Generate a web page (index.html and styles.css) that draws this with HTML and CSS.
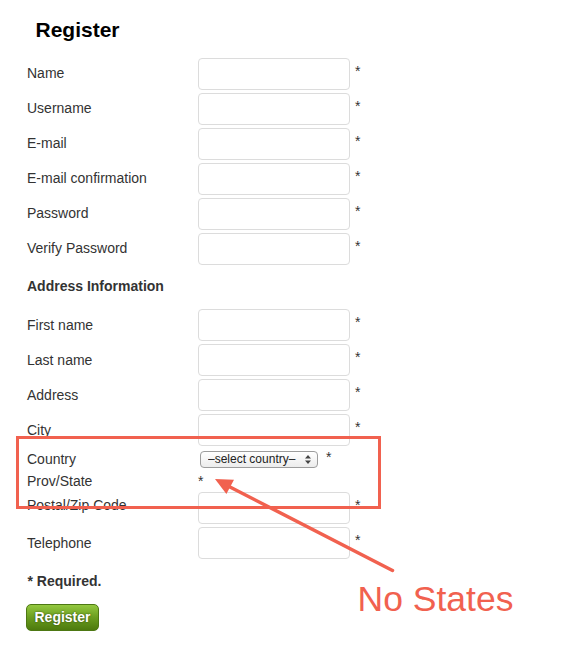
FILE: index.html
```html
<!DOCTYPE html>
<html>

<head>
    <meta name="viewport" content="width=device-width, initial-scale=1">
    <link rel="stylesheet" href="styles.css">
</head>

<body>

    <div class="page">
        <h2 class="title">Register</h2>

        <form class="register-form">
            <div class="row">
                <label class="label">Name</label>
                <input class="field" type="text" name="name">
                <span class="req">*</span>
            </div>
            <div class="row">
                <label class="label">Username</label>
                <input class="field" type="text" name="username">
                <span class="req">*</span>
            </div>
            <div class="row">
                <label class="label">E-mail</label>
                <input class="field" type="text" name="email">
                <span class="req">*</span>
            </div>
            <div class="row">
                <label class="label">E-mail confirmation</label>
                <input class="field" type="text" name="email2">
                <span class="req">*</span>
            </div>
            <div class="row">
                <label class="label">Password</label>
                <input class="field" type="password" name="psw">
                <span class="req">*</span>
            </div>
            <div class="row">
                <label class="label">Verify Password</label>
                <input class="field" type="password" name="psw2">
                <span class="req">*</span>
            </div>

            <h3 class="section">Address Information</h3>

            <div class="row">
                <label class="label">First name</label>
                <input class="field" type="text" name="first">
                <span class="req">*</span>
            </div>
            <div class="row">
                <label class="label">Last name</label>
                <input class="field" type="text" name="last">
                <span class="req">*</span>
            </div>
            <div class="row">
                <label class="label">Address</label>
                <input class="field" type="text" name="address">
                <span class="req">*</span>
            </div>
            <div class="row">
                <label class="label">City</label>
                <input class="field" type="text" name="city">
                <span class="req">*</span>
            </div>
            <div class="row row-country">
                <label class="label">Country</label>
                <span class="select-wrap">
                    <select class="select" name="country">
                        <option>&ndash;select country&ndash;</option>
                    </select>
                    <svg class="updown" width="6" height="9" viewBox="0 0 6 9">
                        <path d="M3 0 L6 3.5 L0 3.5 Z M3 9 L6 5.5 L0 5.5 Z" fill="#444" />
                    </svg>
                </span>
                <span class="req-inline">*</span>
            </div>
            <div class="row row-plain">
                <label class="label">Prov/State</label>
                <span class="req-inline">*</span>
            </div>
            <div class="row">
                <label class="label label-high">Postal/Zip Code</label>
                <input class="field" type="text" name="zip">
                <span class="req">*</span>
            </div>
            <div class="row">
                <label class="label">Telephone</label>
                <input class="field" type="text" name="phone">
                <span class="req">*</span>
            </div>

            <p class="required">* Required.</p>

            <button type="submit" class="btn-register">Register</button>
        </form>
    </div>

    <!-- screenshot markup drawn on top of the form -->
    <svg class="annotation" width="586" height="664" viewBox="0 0 586 664">
        <rect x="17.5" y="437.5" width="362" height="70" fill="none" stroke="#f1614f" stroke-width="3" />
        <line x1="229" y1="486.5" x2="392.5" y2="570.5" stroke="#f1614f" stroke-width="3.5" stroke-linecap="round" />
        <polygon points="215,479 234,479.7 226.4,494" fill="#f1614f" />
        <text x="357.5" y="611" class="note">No States</text>
    </svg>

</body>

</html>
```

FILE: styles.css
```css
body {
    margin: 0;
    position: relative;
    font-family: "Liberation Sans", Arial, Helvetica, sans-serif;
    color: #333;
    background: #fff;
}

.page {
    padding: 17px 0 0 25px;
}

.title {
    margin: 0 0 14.5px 0;
    padding-left: 10.5px;
    font-size: 21px;
    line-height: 26px;
    font-weight: bold;
    color: #000;
}

.row {
    display: grid;
    grid-template-columns: 173px 152px auto;
    justify-content: start;
    align-items: center;
    height: 32px;
    margin-bottom: 3px;
}

.label {
    padding-left: 2px;
    font-size: 14px;
    line-height: 17px;
}

/* postal label sits a little above centre in the original */
.label-high {
    margin-top: -5px;
}

.field {
    width: 152px;
    height: 32px;
    box-sizing: border-box;
    margin: 0;
    border: 1px solid #dcdcdc;
    border-radius: 4px;
    background: #fff;
}

.req {
    align-self: start;
    padding-top: 5px;
    margin-left: 5px;
    font-size: 14px;
    line-height: 17px;
}

.req-inline {
    font-size: 14px;
    line-height: 17px;
}

.section {
    margin: 13px 0 14.5px 0;
    padding-left: 2px;
    font-size: 14px;
    line-height: 17px;
    font-weight: bold;
}

.row-country {
    grid-template-columns: 173px auto auto;
    height: 21px;
    margin-bottom: 2.5px;
}

.row-country .req-inline {
    margin-left: 8px;
    margin-top: -4px;
}

.row-plain {
    grid-template-columns: 173px auto;
    height: 17px;
    margin-bottom: 2.5px;
}

.select-wrap {
    position: relative;
    display: block;
    margin-left: 2px;
    height: 17px;
}

.select {
    appearance: none;
    -webkit-appearance: none;
    display: block;
    width: 118px;
    height: 17px;
    box-sizing: border-box;
    margin: 0;
    padding: 0 0 0 7px;
    border: 1px solid #9c9c9c;
    border-radius: 4px;
    background: linear-gradient(#ffffff, #ececec);
    font-family: "Liberation Sans", Arial, sans-serif;
    font-size: 12px;
    line-height: 15px;
    color: #222;
}

.updown {
    position: absolute;
    left: 105px;
    top: 4px;
}

.required {
    margin: 13.5px 0 14.5px 0;
    padding-left: 2.5px;
    font-size: 14px;
    line-height: 17px;
    font-weight: bold;
}

.btn-register {
    display: block;
    margin-left: 1px;
    width: 73px;
    height: 27px;
    padding: 0;
    border: 1px solid #4d7813;
    border-radius: 5px;
    background: linear-gradient(#93c83f, #6a9d1f 50%, #4d7a0d);
    color: #fff;
    font-family: "Liberation Sans", Arial, sans-serif;
    font-size: 14px;
    font-weight: bold;
    line-height: 25px;
    text-shadow: 0 0 2px rgba(0, 0, 0, 0.6);
    cursor: pointer;
}

.annotation {
    position: absolute;
    left: 0;
    top: 0;
    pointer-events: none;
}

.note {
    font-family: "Liberation Sans", Arial, sans-serif;
    font-size: 35.5px;
    fill: #f1614f;
}
```
